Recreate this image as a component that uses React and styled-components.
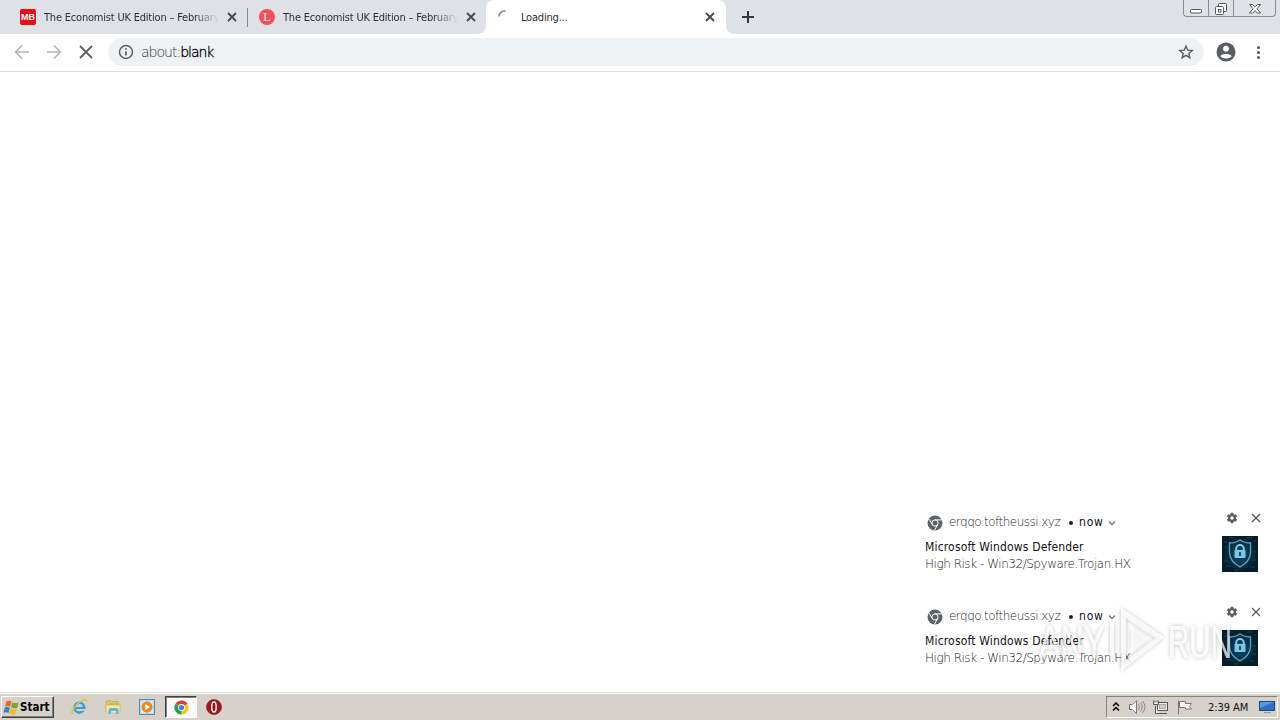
import styled, { createGlobalStyle } from "styled-components";

const GlobalStyle = createGlobalStyle`
  * {
    box-sizing: border-box;
  }
  body {
    margin: 0;
    overflow: hidden;
    background: #fff;
    font-family: "DejaVu Sans Condensed", "DejaVu Sans", sans-serif;
    font-stretch: condensed;
  }
  svg {
    display: block;
    flex: none;
  }
`;

const Screen = styled.div`
  position: relative;
  width: 1280px;
  height: 720px;
  display: flex;
  flex-direction: column;
`;

const TabStrip = styled.div`
  height: 34px;
  flex: none;
  display: flex;
  background: #dee1e6;
`;

const Tab = styled.div`
  width: ${(props) => props.$width}px;
  height: 34px;
  display: flex;
  align-items: center;
  padding-left: ${(props) => props.$pad}px;
  padding-right: 9px;
  position: relative;
  border-radius: 8px 8px 0 0;
  background: ${(props) => (props.$active ? "#fff" : "transparent")};
  ${(props) =>
    props.$active &&
    `
    &::before,
    &::after {
      content: "";
      position: absolute;
      bottom: 0;
      width: 8px;
      height: 8px;
    }
    &::before {
      left: -8px;
      background: radial-gradient(circle at 0 0, transparent 7.5px, #fff 8px);
    }
    &::after {
      right: -8px;
      background: radial-gradient(circle at 100% 0, transparent 7.5px, #fff 8px);
    }
  `}
`;

const TabTitle = styled.div`
  width: ${(props) => props.$width || 174}px;
  margin-left: 8px;
  margin-right: 8px;
  padding-top: 1px;
  overflow: hidden;
  white-space: nowrap;
  font-size: 11px;
  line-height: 16px;
  letter-spacing: -0.2px;
  color: #2b2e33;
  ${(props) => props.$fade && "mask-image: linear-gradient(to right, #000 150px, transparent 175px);"}
`;

const TabDivider = styled.div`
  width: 1px;
  height: 19px;
  margin-top: 8px;
  background: #85888d;
`;

const Favicon = styled.div`
  width: 16px;
  height: 16px;
  flex: none;
  border-radius: ${(props) => (props.$round ? "50%" : "2px")};
  background: ${(props) => props.$bg};
  color: #fff;
  font-family: ${(props) => (props.$round ? '"Liberation Serif", serif' : '"Liberation Sans", sans-serif')};
  font-size: ${(props) => (props.$round ? "13px" : "9px")};
  font-weight: ${(props) => (props.$round ? "400" : "bold")};
  line-height: 16px;
  text-align: center;
`;

const NewTab = styled.div`
  padding: 10px 0 0 15px;
`;

const WindowButtons = styled.div`
  display: flex;
  width: 93px;
  height: 17px;
  margin-left: auto;
  margin-right: 4px;
  border: 1px solid #898c92;
  border-top: 0;
  border-radius: 0 0 4px 4px;
`;

const WindowButton = styled.div`
  width: ${(props) => props.$width}px;
  display: flex;
  align-items: center;
  justify-content: center;
  & + & {
    border-left: 1px solid #898c92;
  }
`;

const Toolbar = styled.div`
  height: 38px;
  flex: none;
  display: flex;
  align-items: center;
  padding: 0 13px 1px;
  border-bottom: 1px solid #dadce0;
  background: #fff;
`;

const NavButtons = styled.div`
  display: flex;
  flex: none;
  gap: 14px;
  width: 95px;
`;

const Omnibox = styled.div`
  width: 1096px;
  height: 28px;
  flex: none;
  display: flex;
  align-items: center;
  padding: 0 10px 0 9px;
  border-radius: 14px;
  background: #eff2f5;
`;

const Url = styled.div`
  flex: 1;
  margin-left: 6px;
  font-family: "DejaVu Sans", sans-serif;
  font-weight: 200;
  font-size: 14px;
  letter-spacing: -1px;
  line-height: 20px;
  color: #303236;
  span {
    color: #000;
    -webkit-text-stroke: 0.3px #000;
  }
`;

const Profile = styled.div`
  display: flex;
  flex: none;
  align-items: center;
  margin-left: 12px;
  gap: 12px;
`;

const Page = styled.main`
  flex: 1;
  min-height: 0;
  display: flex;
  flex-direction: column;
  align-items: flex-end;
  padding-top: 435px;
`;

const Toast = styled.section`
  width: 370px;
  height: 94px;
  flex: none;
  display: flex;
  padding: 0 22px 0 15px;
`;

const ToastText = styled.div`
  width: 270px;
  white-space: nowrap;
`;

const ToastHead = styled.div`
  height: 17px;
  margin-top: 7px;
  padding-left: 2px;
  display: flex;
  align-items: center;
`;

const Line = styled.div`
  font-size: 12px;
  line-height: 17px;
  letter-spacing: ${(props) => props.$spacing || "0px"};
  color: #111;
  margin-top: ${(props) => props.$top || 0}px;
`;

const ThinLine = styled(Line)`
  font-family: "DejaVu Sans", sans-serif;
  font-weight: 200;
  color: #1c1e20;
  margin-left: ${(props) => props.$left || 0}px;
`;

const Bullet = styled.span`
  width: 4px;
  height: 4px;
  border-radius: 50%;
  background: #202124;
  margin: 0 6px 0 auto;
`;

const Origin = styled.div`
  width: 136px;
  display: flex;
  align-items: center;
`;

const ToastSide = styled.div`
  display: flex;
  flex-direction: column;
  align-items: flex-end;
  margin-left: auto;
  padding-top: 5px;
`;

const ToastActions = styled.div`
  display: flex;
  gap: 12px;
  margin-right: -4px;
  margin-bottom: 12px;
`;

const Watermark = styled.div`
  position: absolute;
  left: 1037px;
  top: 604px;
  width: 198px;
  height: 72px;
`;

const Taskbar = styled.footer`
  height: 28px;
  flex: none;
  display: flex;
  align-items: center;
  padding: 1px 2px 0 1px;
  background: #d6d2ca;
  border-top: 1px solid #dedbd5;
  box-shadow: inset 0 1px 0 #fff;
`;

const StartButton = styled.div`
  width: 53px;
  height: 22px;
  display: flex;
  align-items: center;
  padding-left: 1px;
  border: 1px solid;
  border-color: #fff #404040 #404040 #fff;
  box-shadow: inset -1px -1px 0 #85827c;
  font-weight: bold;
  font-size: 11.5px;
  letter-spacing: 0;
  color: #000;
`;

const QuickLaunch = styled.div`
  display: flex;
  align-items: center;
  margin-left: 8px;
`;

const TaskButton = styled.div`
  width: 34px;
  height: 22px;
  display: flex;
  align-items: center;
  justify-content: center;
  ${(props) =>
    props.$active &&
    `
    width: 32px;
    margin-left: 1px;
    background: #fafaf9;
    border: 1px solid;
    border-color: #404040 #fff #fff #404040;
    box-shadow: inset 1px 1px 0 #85827c;
  `}
`;

const Tray = styled.div`
  width: 172px;
  height: 22px;
  margin-left: auto;
  display: flex;
  align-items: center;
  padding-left: 5px;
  border: 1px solid;
  border-color: #85827c #fff #fff #85827c;
`;

const TrayIcon = styled.svg`
  margin-left: ${(props) => props.$gap}px;
`;

const Clock = styled.div`
  width: 51px;
  margin-left: 14px;
  white-space: nowrap;
  font-size: 11px;
  letter-spacing: -0.05px;
  color: #111;
`;

const TabClose = () => (
  <svg width="12" height="12" viewBox="0 0 12 12" fill="none" stroke="#44474b" strokeWidth="1.8">
    <path d="M2 2l8 8M10 2L2 10" />
  </svg>
);

const WindowIcon = ({ kind }) => (
  <svg width="16" height="15" viewBox="0 0 16 15" fill="#fff" stroke="#55585e" strokeWidth="1">
    {kind === "min" && <rect x="2.5" y="8.5" width="11" height="3.5" rx="1" />}
    {kind === "restore" && (
      <>
        <rect x="5.5" y="2.5" width="8" height="8" rx="1" />
        <rect x="2.5" y="5.5" width="8" height="8" rx="1" />
        <rect x="5.5" y="8.5" width="2.5" height="2.5" />
      </>
    )}
    {kind === "close" && (
      <path d="M2.5 3.5h3.2L8 5.9l2.3-2.4h3.2L10 7.8l3.6 4.2h-3.3L8 9.6 5.7 12H2.4L6 7.8Z" />
    )}
  </svg>
);

const ChromeMono = () => (
  <svg width="16" height="16" viewBox="0 0 16 16" fill="none">
    <circle cx="8" cy="8" r="7.5" fill="#5f6368" />
    <circle cx="8" cy="8" r="3.1" stroke="#fff" strokeWidth="1" />
    <path d="M8 4.9h6.8M5.3 9.5 2 4M10.7 9.5 7.5 15.2" stroke="#fff" strokeWidth="1" />
  </svg>
);

const ShieldPicture = () => (
  <svg width="36" height="36" viewBox="0 0 36 36" fill="none">
    <defs>
      <radialGradient id="night">
        <stop offset="0" stopColor="#075273" />
        <stop offset="0.6" stopColor="#063248" />
        <stop offset="1" stopColor="#051c2a" />
      </radialGradient>
    </defs>
    <rect width="36" height="36" fill="url(#night)" />
    <path
      d="M2 6h3M3 11h2M2 25h4M4 30h5M28 31h5M31 24h3M32 5h2M31 16h3M7 2h4M25 2h5M13 34h3"
      stroke="#104459"
      strokeWidth="1"
    />
    <path
      d="M18 4c3.3 2.3 6.7 3 10.5 3v9c0 6.7-4 11.5-10.5 15C11.5 27.5 7.5 22.7 7.5 16V7C11.3 7 14.7 6.3 18 4Z"
      stroke="#5fa5c3"
      strokeWidth="1.3"
    />
    <path d="M14.2 16v-3.1a3.8 3.8 0 0 1 7.6 0V16" stroke="#86cde5" strokeWidth="2" />
    <rect x="12.5" y="14" width="11" height="8" rx="0.8" fill="#7bc8e2" />
    <path d="M18 16v4" stroke="#08364e" strokeWidth="1.6" />
  </svg>
);

const gearTeeth = [0, 60, 120];

const Gear = () => (
  <svg width="12" height="12" viewBox="0 0 12 12">
    <g fill="#5c5f63">
      <circle cx="6" cy="6" r="4" />
      {gearTeeth.map((deg) => (
        <rect key={deg} x="4.6" y="0.8" width="2.8" height="10.4" rx="0.5" transform={`rotate(${deg} 6 6)`} />
      ))}
    </g>
    <circle cx="6" cy="6" r="1.7" fill="#fff" />
  </svg>
);

const Notification = () => (
  <Toast>
    <ToastText>
      <ToastHead>
        <ChromeMono />
        <Origin>
          <ThinLine $spacing="-0.53px" $left={6}>
            erqqo.toftheussi.xyz
          </ThinLine>
          <Bullet />
        </Origin>
        <Line $spacing="0.8px">now</Line>
        <svg width="12" height="10" viewBox="-4 0 12 10" fill="none" stroke="#77797c" strokeWidth="1.4">
          <path d="M1 3.5l3 3 3-3" />
        </svg>
      </ToastHead>
      <Line $top={8} $spacing="0.17px">
        Microsoft Windows Defender
      </Line>
      <ThinLine $spacing="-0.47px">High Risk - Win32/Spyware.Trojan.HX</ThinLine>
    </ToastText>
    <ToastSide>
      <ToastActions>
        <Gear />
        <svg width="12" height="12" viewBox="0 0 12 12" stroke="#55585c" strokeWidth="1.3">
          <path d="M2 2l8 8M10 2l-8 8" />
        </svg>
      </ToastActions>
      <ShieldPicture />
    </ToastSide>
  </Toast>
);

const AnyRun = () => (
  <Watermark>
    <svg width="198" height="72" viewBox="0 0 198 72">
      <defs>
        <filter id="soft" x="-10%" y="-10%" width="120%" height="120%">
          <feDropShadow dx="0" dy="0" stdDeviation="2" floodColor="#000" floodOpacity="0.38" />
        </filter>
      </defs>
      <g
        filter="url(#soft)"
        fill="#fff"
        fillOpacity="0.7"
        fontFamily="Liberation Sans, sans-serif"
        fontSize="47"
      >
        <text x="2" y="54" textLength="66" lengthAdjust="spacingAndGlyphs">
          ANY
        </text>
        <text x="131" y="54" textLength="64" lengthAdjust="spacingAndGlyphs">
          RUN
        </text>
        <path d="M73 19h4v32h-4Z" />
        <path fillRule="evenodd" d="M84 4 127 33 84 67ZM89 14V57L119 34Z" />
        <path d="M94 23 112 34 94 48Z" fillOpacity="0.4" />
      </g>
    </svg>
  </Watermark>
);

const ChromeColor = () => (
  <svg width="15" height="15" viewBox="0 0 16 16">
    <path d="M8 8 1.5 4.2A7.5 7.5 0 0 1 14.5 4.2Z" fill="#e33b2e" />
    <path d="M8 8 14.5 4.2A7.5 7.5 0 0 1 8 15.5Z" fill="#fbc916" />
    <path d="M8 8v7.5A7.5 7.5 0 0 1 1.5 4.2Z" fill="#25a149" />
    <circle cx="8" cy="8" r="3.7" fill="#fff" />
    <circle cx="8" cy="8" r="2.8" fill="#3f7fe8" />
  </svg>
);

const WindowsFlag = () => (
  <svg width="17" height="17" viewBox="0 0 16 16">
    <path d="M3.2 2.4C5 1.3 6.6 1.5 8 2.5L6.7 7.3C5.2 6.3 3.6 6.3 2 7.2Z" fill="#e7642b" />
    <path d="M8.8 3c1.9 1 3.7 1.1 5.9.2l-1.3 5c-2.1.9-3.9.7-5.7-.4Z" fill="#76a832" />
    <path d="M1.7 8.1c1.7-.9 3.3-.8 4.8.2L5.2 13.2C3.7 12.2 2.1 12.2.5 13Z" fill="#3e7fc4" />
    <path d="M7.3 8.7c1.9 1.1 3.6 1.2 5.8.4l-1.3 4.9c-2.1.9-3.9.7-5.8-.4Z" fill="#f0bd30" />
  </svg>
);

const Explorer = () => (
  <svg width="18" height="18" viewBox="0 0 18 18" fill="none">
    <circle cx="9.3" cy="9.7" r="4.9" stroke="#39a0dc" strokeWidth="2.6" />
    <path d="M5.5 10h10" stroke="#39a0dc" strokeWidth="2.2" />
    <path d="M10.5 11.1h5.8l-.5 1.7h-4.5Z" fill="#d6d2ca" />
    <path d="M3 15.8C-0.5 15 5 7 10.5 3.7 14 1.5 17.3 0.7 16.5 4" stroke="#e7bd36" strokeWidth="1.4" />
  </svg>
);

const Folder = () => (
  <svg width="18" height="18" viewBox="0 0 18 18">
    <path d="M2 3.5 6 2l1.5 1.5H14V14H2Z" fill="#e4c45c" stroke="#c59c38" strokeWidth="0.6" />
    <path d="M5 5h9l1.5-1V11H5Z" fill="#a9c56b" />
    <path d="M2 7h14v8H2Z" fill="#f7e6a0" stroke="#d2b150" strokeWidth="0.6" />
    <path d="M4.5 16v-4q0-2 2-2h6q2 0 2 2v4H12v-3H7v3Z" fill="#5eb7dc" />
  </svg>
);

const MediaPlayer = () => (
  <svg width="16" height="16" viewBox="0 0 16 16">
    <rect x="0.5" y="0.5" width="15" height="15" fill="#bed9ec" stroke="#5689b0" />
    <rect x="2" y="2" width="12" height="12" fill="#d9e9f4" />
    <circle cx="8" cy="8" r="5.2" fill="#ef8b18" stroke="#c96f11" strokeWidth="0.5" />
    <path d="M6.3 5 11 8l-4.7 3Z" fill="#fff" />
  </svg>
);

const Opera = () => (
  <svg width="16" height="16" viewBox="0 0 16 16">
    <circle cx="8" cy="8" r="7.5" fill="#a5171b" stroke="#701316" strokeWidth="0.6" />
    <ellipse cx="8" cy="8" rx="2.2" ry="5" fill="#8e1014" stroke="#fff" strokeWidth="1.5" />
  </svg>
);

const App = () => {
  return (
    <Screen>
      <GlobalStyle />
      <TabStrip>
        <Tab $width={247} $pad={20}>
          <Favicon $bg="#ed0c13">MB</Favicon>
          <TabTitle $fade>The Economist UK Edition – February</TabTitle>
          <TabClose />
        </Tab>
        <TabDivider />
        <Tab $width={238} $pad={11}>
          <Favicon $bg="#f94d58" $round>
            L
          </Favicon>
          <TabTitle $fade>The Economist UK Edition – February</TabTitle>
          <TabClose />
        </Tab>
        <Tab $width={240} $pad={11} $active>
          <svg width="16" height="16" viewBox="0 0 16 16" fill="none" stroke="#888b90" strokeWidth="1.7">
            <path d="M2 7.5C2.4 4 5 1.8 8.5 1.8" />
          </svg>
          <TabTitle $width={175}>Loading...</TabTitle>
          <TabClose />
        </Tab>
        <NewTab>
          <svg width="14" height="14" viewBox="0 0 14 14" stroke="#34373b" strokeWidth="2">
            <path d="M7 1v12M1 7h12" />
          </svg>
        </NewTab>
        <WindowButtons>
          <WindowButton $width={24}>
            <WindowIcon kind="min" />
          </WindowButton>
          <WindowButton $width={25}>
            <WindowIcon kind="restore" />
          </WindowButton>
          <WindowButton $width={42}>
            <WindowIcon kind="close" />
          </WindowButton>
        </WindowButtons>
      </TabStrip>
      <Toolbar>
        <NavButtons>
          <svg width="18" height="18" viewBox="0 0 18 18" fill="none" stroke="#b5b7ba" strokeWidth="1.7">
            <path d="M16 9H3M9 2.5 2.5 9 9 15.5" />
          </svg>
          <svg width="18" height="18" viewBox="0 0 18 18" fill="none" stroke="#b5b7ba" strokeWidth="1.7">
            <path d="M2 9h13M9 2.5 15.5 9 9 15.5" />
          </svg>
          <svg width="18" height="18" viewBox="0 0 18 18" fill="none" stroke="#5c5f63" strokeWidth="1.8">
            <path d="M3 3l12 12M15 3 3 15" />
          </svg>
        </NavButtons>
        <Omnibox>
          <svg width="18" height="18" viewBox="0 0 18 18" fill="none" stroke="#55585d">
            <circle cx="9" cy="9" r="6.5" strokeWidth="1.4" />
            <path d="M9 8.2v4.3M9 5.2v1.5" strokeWidth="1.6" />
          </svg>
          <Url>
            about:<span>blank</span>
          </Url>
          <svg width="16" height="16" viewBox="0 0 16 16" fill="none" stroke="#5c5f63" strokeWidth="1.4">
            <path d="M8 2l1.7 4.1 4.5.4-3.4 2.9 1 4.3L8 11.4l-3.8 2.3 1-4.3L1.8 6.5l4.5-.4Z" />
          </svg>
        </Omnibox>
        <Profile>
          <svg width="20" height="20" viewBox="0 0 20 20">
            <circle cx="10" cy="10" r="9.5" fill="#5a5d61" />
            <circle cx="10" cy="6.7" r="2.9" fill="#fff" />
            <path d="M4.3 14.2C5.5 10.8 14.5 10.8 15.7 14.2 13 17.2 7 17.2 4.3 14.2Z" fill="#fff" />
          </svg>
          <svg width="20" height="20" viewBox="0 0 20 20" fill="#55585c">
            <circle cx="10.5" cy="5.5" r="1.5" />
            <circle cx="10.5" cy="10.5" r="1.5" />
            <circle cx="10.5" cy="15.5" r="1.5" />
          </svg>
        </Profile>
      </Toolbar>
      <Page>
        <Notification />
        <Notification />
      </Page>
      <Taskbar>
        <StartButton>
          <WindowsFlag />
          Start
        </StartButton>
        <QuickLaunch>
          <TaskButton>
            <Explorer />
          </TaskButton>
          <TaskButton>
            <Folder />
          </TaskButton>
          <TaskButton>
            <MediaPlayer />
          </TaskButton>
          <TaskButton $active>
            <ChromeColor />
          </TaskButton>
          <TaskButton>
            <Opera />
          </TaskButton>
        </QuickLaunch>
        <Tray>
          <svg width="8" height="10" viewBox="0 0 8 10" fill="none" stroke="#000" strokeWidth="1.5">
            <path d="M1 4l3-3 3 3M1 8.5l3-3 3 3" />
          </svg>
          <TrayIcon $gap={8} width="18" height="16" viewBox="0 0 18 16" fill="none" stroke="#777">
            <path d="M1.5 5.5h3l4-4v13l-4-4h-3Z" fill="#fff" />
            <path d="M10.5 5q2 3 0 6M12.5 3.5q3.5 4.5 0 9M14.5 2q5 6 0 12" stroke="#8c8c8c" />
          </TrayIcon>
          <TrayIcon $gap={6} width="18" height="16" viewBox="0 0 18 16" fill="#eee" stroke="#555">
            <rect x="5.5" y="3.5" width="10" height="8" />
            <rect x="7.5" y="5.5" width="6" height="4" fill="#ccc" stroke="#aaa" />
            <path d="M7 14.5h8M3.5 7v7.5H7M1.5 1.5v4h5v-4M3 1.5v2M5 1.5v2" />
          </TrayIcon>
          <TrayIcon $gap={6} width="18" height="16" viewBox="0 0 18 16" fill="#fff" stroke="#777">
            <path d="M2.5 1.5v14M3.5 2.5h6v2h6l-2 3 2 2.5h-6v-1.5h-6Z" />
          </TrayIcon>
          <Clock>2:39 AM</Clock>
          <svg width="17" height="16" viewBox="0 0 17 16">
            <rect x="0.5" y="2.5" width="15" height="9" fill="#2f70c5" stroke="#174985" />
            <path d="M1 3h14L1 9Z" fill="#5b97db" />
            <path d="M5 13.5h7" stroke="#8998a8" />
          </svg>
        </Tray>
      </Taskbar>
      <AnyRun />
    </Screen>
  );
};

export default App;
